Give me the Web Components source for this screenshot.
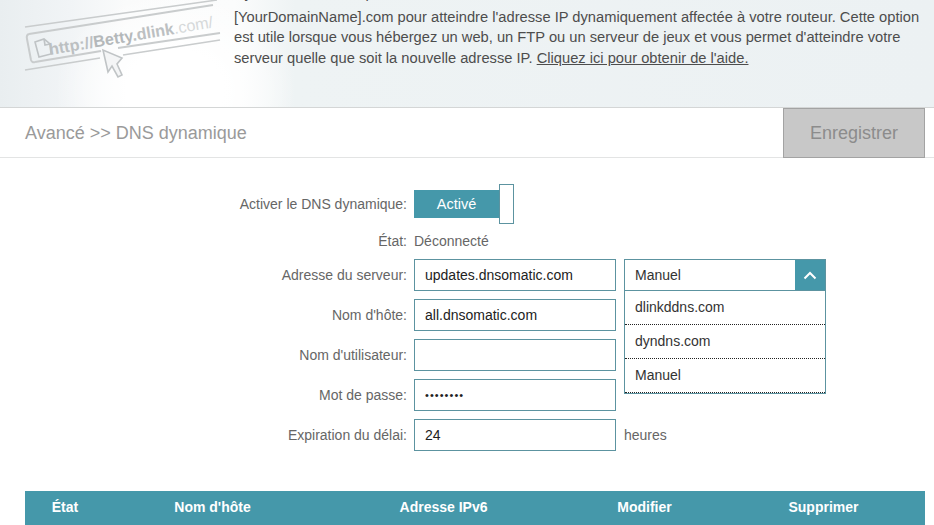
<!DOCTYPE html>
<html lang="fr">
<head>
<meta charset="utf-8">
<title>DNS dynamique</title>
<style>
    html, body { margin: 0; padding: 0; background: #fff; }
    body {
        width: 934px;
        height: 525px;
        overflow: hidden;
        font-family: "Liberation Sans", Arial, sans-serif;
    }
</style>
</head>
<body>
<dns-page></dns-page>

<script>
// ── Shared colours ────────────────────────────────────────────────────────────
const TEAL = '#4598aa';
const EDGE = '#5c93a0';

// ── Intro banner with the address-bar artwork ─────────────────────────────────
class IntroBanner extends HTMLElement {
    constructor() {
        super();
        this.attachShadow({ mode: 'open' });
        this.shadowRoot.innerHTML = `
            <style>
                :host {
                    display: flex;
                    height: 107px;
                    overflow: hidden;
                    background:
                        radial-gradient(ellipse 120px 100px at 175px 90px, #fff 40%, rgba(255,255,255,0) 100%),
                        linear-gradient(90deg, #e9eef0 0, #f1f4f6 70px, #fafbfb 125px, #fbfcfc 235px, #eef3f4 295px, #ecf1f3 100%);
                }
                .art { flex: 0 0 234px; height: 107px; }
                .text {
                    margin-top: -17px;
                    width: 692px;
                    font-size: 14.7px;
                    line-height: 20.5px;
                    color: #4d4d4d;
                }
                .cut { margin-bottom: 3px; white-space: nowrap; }
                .text a { color: inherit; text-decoration: underline; }
                text { font-family: "Liberation Sans", Arial, sans-serif; }
            </style>
            <svg class="art" viewBox="0 0 234 107" fill="none">
                <g stroke="#c9cccd" stroke-width="2">
                    <path d="M25 27 L217 0" stroke-width="1.5"/>
                    <path d="M29 34 L213 5"/>
                    <path d="M29 34 Q26 35 27 39 L31 60 Q32 63 35 62"/>
                    <path d="M35 62 L101 51"/>
                    <path d="M118 48 L220 33"/>
                    <path d="M25 70 L100 58" stroke-width="1.5"/>
                    <path d="M123 55 L220 40" stroke-width="1.5"/>
                </g>
                <path d="M35 42 L44 39 L50 44 L51 54 L39 57 Z M44 39 L45 45 L50 44" stroke="#bfc3c5" stroke-width="1.6"/>
                <text x="50" y="55" transform="rotate(-9.6 50 55)" font-size="16.2" font-weight="700" fill="#bcc0c2">http://<tspan fill="#b4b8ba">Betty</tspan>.dlink<tspan fill="#d6d9da" font-weight="400">.com/</tspan></text>
                <path d="M103 50 L108 72 L112 66 L118 77 L122 75 L117 64 L122 58 Z" fill="#f4f5f6" stroke="#c0c4c6" stroke-width="1.6"/>
            </svg>
            <div class="text">
                <div class="cut">Dynamic DNS vous permet d'utiliser un nom de domaine tel</div>
                [YourDomainName].com pour atteindre l'adresse IP dynamiquement affectée à votre routeur. Cette option est utile lorsque vous hébergez un web, un FTP ou un serveur de jeux et vous permet d'atteindre votre serveur quelle que soit la nouvelle adresse IP. <a href="#">Cliquez ici pour obtenir de l'aide.</a>
            </div>
        `;
    }
}
customElements.define('intro-banner', IntroBanner);

// ── Title strip with the save button ──────────────────────────────────────────
class TitleBar extends HTMLElement {
    constructor() {
        super();
        this.attachShadow({ mode: 'open' });
        this.shadowRoot.innerHTML = `
            <style>
                :host {
                    display: flex;
                    align-items: stretch;
                    justify-content: space-between;
                    box-sizing: border-box;
                    height: 51px;
                    padding: 0 9px 0 25px;
                    border-top: 1px solid #d4d6d6;
                    border-bottom: 1px solid #e3e4e4;
                }
                h1 {
                    margin: 1px 0 0;
                    align-self: center;
                    font-size: 18px;
                    font-weight: 400;
                    color: #9a9a9a;
                }
                button {
                    box-sizing: border-box;
                    width: 142px;
                    margin-bottom: -1px;
                    padding: 0;
                    border: 1px solid #a3a3a3;
                    background: #c8c8c8;
                    font: 18px "Liberation Sans", Arial, sans-serif;
                    color: #8c8c8c;
                }
            </style>
            <h1><slot></slot></h1>
            <button type="button">Enregistrer</button>
        `;
    }
}
customElements.define('title-bar', TitleBar);

// ── On/off switch ─────────────────────────────────────────────────────────────
class DnsToggle extends HTMLElement {
    constructor() {
        super();
        this.attachShadow({ mode: 'open' });
        this.shadowRoot.innerHTML = `
            <style>
                :host {
                    display: flex;
                    align-items: center;
                    height: 40px;
                    width: 100px;
                }
                .on {
                    width: 85px;
                    height: 28px;
                    background: ${TEAL};
                    color: #fff;
                    font-size: 14.5px;
                    line-height: 28px;
                    text-align: center;
                }
                .knob {
                    box-sizing: border-box;
                    width: 15px;
                    height: 40px;
                    background: #fff;
                    border: 1px solid ${EDGE};
                }
            </style>
            <div class="on"><slot></slot></div>
            <div class="knob"></div>
        `;
    }
}
customElements.define('dns-toggle', DnsToggle);

// ── Label + value row of the form ─────────────────────────────────────────────
class FormRow extends HTMLElement {
    constructor() {
        super();
        this.attachShadow({ mode: 'open' });
        this.shadowRoot.innerHTML = `
            <style>
                :host {
                    display: grid;
                    grid-template-columns: 182px auto;
                    column-gap: 7px;
                    align-items: center;
                    font-size: 14px;
                    color: #666;
                }
                label { text-align: right; white-space: nowrap; }
                .value { display: flex; align-items: center; }
            </style>
            <label></label>
            <div class="value"><slot></slot></div>
        `;
    }

    connectedCallback() {
        this.shadowRoot.querySelector('label').textContent = this.getAttribute('label') || '';
    }
}
customElements.define('form-row', FormRow);

// ── Text box ──────────────────────────────────────────────────────────────────
class TextBox extends HTMLElement {
    constructor() {
        super();
        this.attachShadow({ mode: 'open' });
        this.shadowRoot.innerHTML = `
            <style>
                :host {
                    display: block;
                    box-sizing: border-box;
                    width: 202px;
                    height: 32px;
                    border: 1px solid ${EDGE};
                    background: #fff;
                }
                input {
                    box-sizing: border-box;
                    width: 100%;
                    height: 100%;
                    padding: 0 10px;
                    border: 0;
                    outline: 0;
                    background: transparent;
                    font: 14px "Liberation Sans", Arial, sans-serif;
                    color: #222;
                }
                :host([type="password"]) input {
                    font-size: 11px;
                    letter-spacing: 1.05px;
                }
            </style>
            <input>
        `;
    }

    connectedCallback() {
        const input = this.shadowRoot.querySelector('input');
        input.type = this.getAttribute('type') || 'text';
        input.setAttribute('value', this.getAttribute('value') || '');
    }
}
customElements.define('text-box', TextBox);

// ── Opened drop-down; it hangs over the rows beneath it ───────────────────────
class ServerSelect extends HTMLElement {
    constructor() {
        super();
        this.attachShadow({ mode: 'open' });
        this.shadowRoot.innerHTML = `
            <style>
                :host {
                    position: relative;
                    display: block;
                    box-sizing: border-box;
                    width: 202px;
                    height: 32px;
                    margin-left: 8px;
                    border: 1px solid ${EDGE};
                    background: #fff;
                    font-size: 14px;
                    color: #333;
                }
                .current {
                    display: flex;
                    justify-content: space-between;
                    height: 30px;
                    line-height: 30px;
                    padding-left: 10px;
                }
                .arrow {
                    display: flex;
                    align-items: center;
                    justify-content: center;
                    width: 30px;
                    background: ${TEAL};
                }
                ul {
                    position: absolute;
                    left: -1px;
                    top: 30px;
                    width: 200px;
                    margin: 0;
                    padding: 0;
                    list-style: none;
                    background: #fff;
                    border: 1px solid ${EDGE};
                }
                li {
                    box-sizing: border-box;
                    height: 34px;
                    line-height: 32px;
                    padding-left: 10px;
                    border-bottom: 1px dotted #222;
                }
            </style>
            <div class="current">
                <span>Manuel</span>
                <span class="arrow">
                    <svg width="14" height="9" viewBox="0 0 14 9" fill="none"><path d="M1.5 7.5 L7 2 L12.5 7.5" stroke="#fff" stroke-width="2"/></svg>
                </span>
            </div>
            <ul>
                <li>dlinkddns.com</li>
                <li>dyndns.com</li>
                <li>Manuel</li>
            </ul>
        `;
    }
}
customElements.define('server-select', ServerSelect);

// ── Head row of the host table ────────────────────────────────────────────────
class HostTableHead extends HTMLElement {
    constructor() {
        super();
        this.attachShadow({ mode: 'open' });
        this.shadowRoot.innerHTML = `
            <style>
                :host {
                    display: grid;
                    grid-template-columns: 80px 215px 247px 155px 203px;
                    align-items: center;
                    box-sizing: border-box;
                    height: 34px;
                    padding-bottom: 2px;
                    margin: 0 9px 0 25px;
                    background: ${TEAL};
                    font-size: 14px;
                    font-weight: 700;
                    color: #fff;
                    text-align: center;
                }
            </style>
            <span>État</span>
            <span>Nom d'hôte</span>
            <span>Adresse IPv6</span>
            <span>Modifier</span>
            <span>Supprimer</span>
        `;
    }
}
customElements.define('host-table-head', HostTableHead);

// ── Whole page ────────────────────────────────────────────────────────────────
class DnsPage extends HTMLElement {
    constructor() {
        super();
        this.attachShadow({ mode: 'open' });
        this.shadowRoot.innerHTML = `
            <style>
                :host { display: block; }
                form {
                    display: flex;
                    flex-direction: column;
                    gap: 8px;
                    padding: 26px 0 0 225px;
                    height: 307px;
                    box-sizing: border-box;
                    margin-bottom: 26px;
                }
                .state { height: 19px; margin: 0 0 1px; }
                .first { margin-bottom: -1px; }
            </style>
            <intro-banner></intro-banner>
            <title-bar>Avancé &gt;&gt; DNS dynamique</title-bar>
            <form>
                <form-row class="first" label="Activer le DNS dynamique:"><dns-toggle>Activé</dns-toggle></form-row>
                <form-row class="state" label="État:">Déconnecté</form-row>
                <form-row label="Adresse du serveur:">
                    <text-box value="updates.dnsomatic.com"></text-box>
                    <server-select></server-select>
                </form-row>
                <form-row label="Nom d'hôte:"><text-box value="all.dnsomatic.com"></text-box></form-row>
                <form-row label="Nom d'utilisateur:"><text-box></text-box></form-row>
                <form-row label="Mot de passe:"><text-box type="password" value="password"></text-box></form-row>
                <form-row label="Expiration du délai:"><text-box value="24"></text-box><span style="margin-left:8px">heures</span></form-row>
            </form>
            <host-table-head></host-table-head>
        `;
    }
}
customElements.define('dns-page', DnsPage);
</script>
</body>
</html>
